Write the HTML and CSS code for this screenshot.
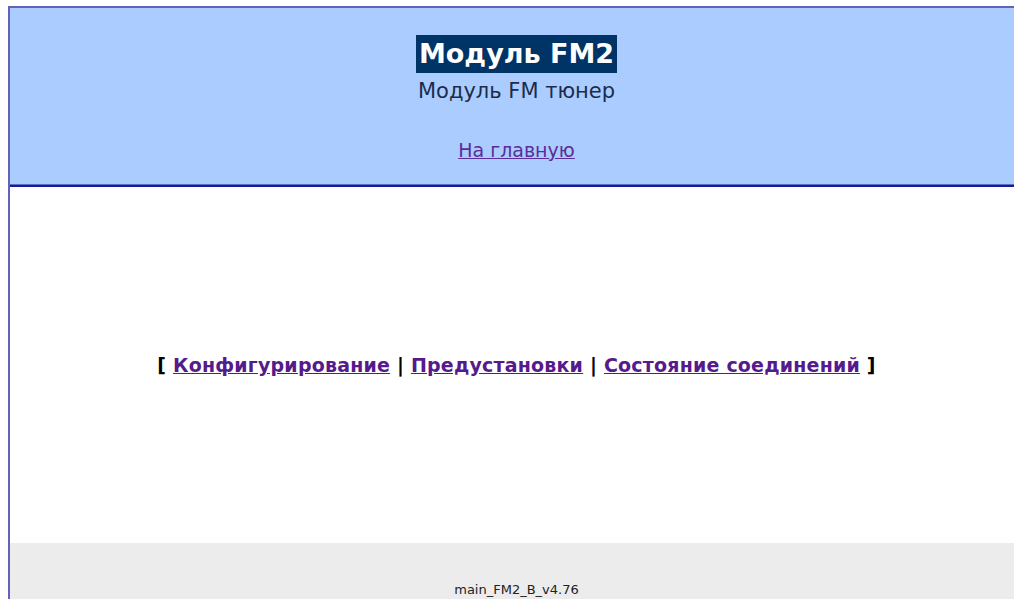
FILE: index.html
```html
<!DOCTYPE html>
<html lang="ru">
<head>
<meta charset="utf-8">
<title>Модуль FM2</title>
<link rel="stylesheet" href="styles.css">
</head>
<body>
<div class="frame">
  <header class="head">
    <h1 class="title"><span class="title-mark">Модуль FM2</span></h1>
    <p class="subtitle">Модуль FM тюнер</p>
    <a class="home-link" href="#">На главную</a>
  </header>
  <main class="menu">
    <p class="menu-line">[ <a href="#">Конфигурирование</a> | <a href="#">Предустановки</a> | <a href="#">Состояние соединений</a> ]</p>
  </main>
  <footer class="foot">main_FM2_B_v4.76</footer>
</div>
</body>
</html>
```
FILE: styles.css
```css
html {
  overflow: hidden;
}

html, body {
  margin: 0;
  padding: 0;
  background: #ffffff;
  font-family: "DejaVu Sans", Verdana, sans-serif;
  color: #000000;
}

/* page frame is a little wider than the window; its right edge stays off-screen */
.frame {
  margin: 6px 0 0 8px;
  width: 1013px;
  border-left: 2px solid #6262b8;
  border-top: 2px solid #6262b8;
  height: 593px;
  display: flex;
  flex-direction: column;
}

.head {
  background: #aaccff;
  border-bottom: 2px solid #1a1a99;
  box-shadow: inset 0 -1px 0 #5a6fcc;
  height: 177px;
  flex-shrink: 0;
  display: flex;
  flex-direction: column;
  align-items: center;
}

.title {
  margin: 27px 0 0;
  font-size: 27px;
  font-weight: bold;
  line-height: 38px;
}

.title-mark {
  display: inline-block;
  background: #003366;
  color: #ffffff;
  padding: 0 3px;
}

.subtitle {
  margin: 3px 0 0;
  font-size: 21px;
  line-height: 30px;
  color: #1c2c4c;
}

.home-link {
  margin-top: 32px;
  font-size: 19px;
  line-height: 24px;
  color: #5b2d9a;
}

.menu {
  flex: 1;
  display: flex;
  align-items: center;
  justify-content: center;
}

.menu-line {
  margin: 0;
  font-size: 19px;
  font-weight: bold;
  letter-spacing: 0.2px;
}

.menu-line a {
  color: #551a8b;
}

.foot {
  background: #ececec;
  height: 58px;
  flex-shrink: 0;
  box-sizing: border-box;
  padding-top: 40px;
  text-align: center;
  font-size: 13px;
  line-height: 14px;
  color: #222222;
}
```
